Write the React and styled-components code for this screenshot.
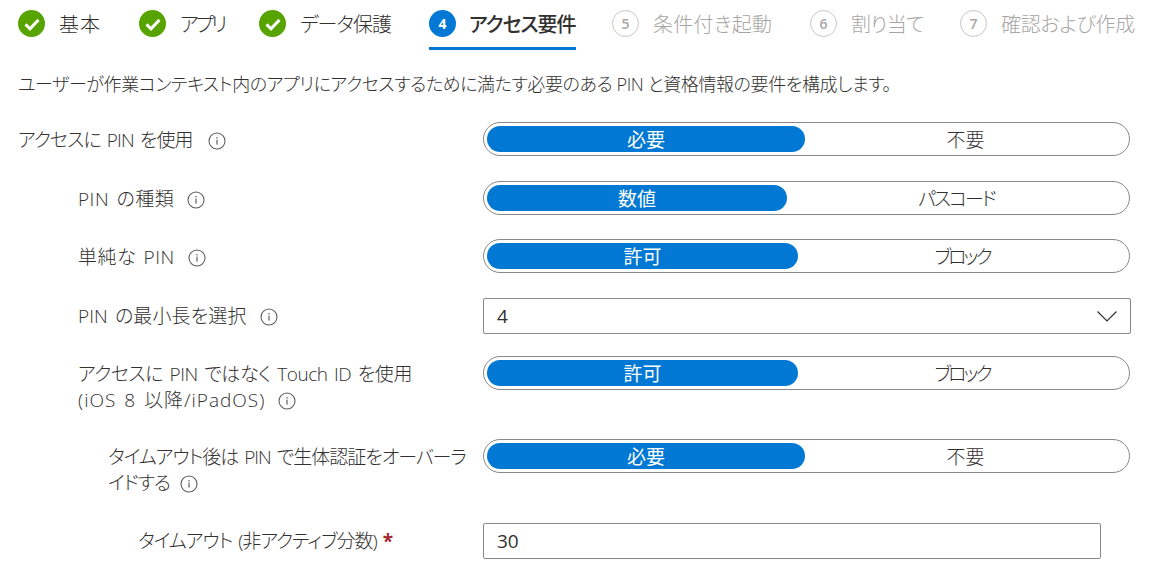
import React from 'react';
import styled, { createGlobalStyle } from 'styled-components';

const Global = createGlobalStyle`
  html, body { margin: 0; padding: 0; background: #fff; }
  body { font-family: "Open Sans", "Noto Sans CJK JP", sans-serif; color: #323130; overflow: hidden; font-feature-settings: "palt"; }
`;
const Page = styled.div`
  width: 1160px; height: 567px; overflow: hidden; padding: 0 0 0 18px; box-sizing: border-box;
`;
const Steps = styled.div`
  display: flex; height: 50px; align-items: flex-start;
`;
const Step = styled.div`
  display: flex; align-items: center; gap: ${p => p.$active ? 13 : 14}px; height: 50px; width: ${p => p.$w}px; box-sizing: border-box;
  font-size: 20px; white-space: nowrap; letter-spacing: ${p => p.$ls}px;
  font-weight: ${p => p.$active ? 500 : 300};
  color: ${p => p.$muted ? '#a8a6a4' : '#323130'};
  border-bottom: 3px solid ${p => p.$active ? '#0078d4' : 'transparent'};
  margin-right: ${p => p.$gap}px;
`;
const Description = styled.p`
  margin: 22px 0 0; font-size: 18px; line-height: 24px; font-weight: 300; letter-spacing: -0.4px; white-space: nowrap; height: 25px;
`;
const Form = styled.div`
  display: flex; flex-direction: column; margin-top: 25px;
`;
const Row = styled.div`
  display: grid; grid-template-columns: 465px 1fr; align-items: start; height: ${p => p.$h}px;
`;
const Label = styled.div`
  padding: 5px 17px 0 ${p => p.$indent}px; box-sizing: border-box;
  font-size: 19px; line-height: 26px; font-weight: 300; word-spacing: 2px; letter-spacing: ${p => p.$ls}px;
`;
const Line = styled.span`
  letter-spacing: ${p => p.$ls}px;
`;
const Toggle = styled.div`
  display: flex; width: 647px; height: 34px; box-sizing: border-box; padding: 3px; border: 1px solid #8a8886; border-radius: 17px;
`;
const Segment = styled.div`
  display: flex; align-items: center; justify-content: center; border-radius: 14px; font-size: 19px; font-weight: 300;
  letter-spacing: ${p => p.$ls || 0}px;
  ${p => p.$on ? `background:#0078d4;color:#fff;width:${p.$w}px;flex:none;font-weight:400;` : 'flex:1;color:#323130;'}
`;
const Field = styled.div`
  display: flex; align-items: center; justify-content: space-between; box-sizing: border-box; height: 36px; width: ${p => p.$w}px;
  border: 1px solid #8a8886; border-radius: 2px; padding: 0 13px 0 13px; font-size: 19px; font-weight: 400; color: #323130;
`;
const Req = styled.span`color: #a4262c; font-weight: 700; letter-spacing: 0;`;
const InfoWrap = styled.svg`display: inline-block; vertical-align: -3px; margin-left: ${p => p.$ml || 13}px;`;
const Badge = styled.span`
  display: flex; align-items: center; justify-content: center; flex: none; box-sizing: border-box; width: 27px; height: 27px; border-radius: 50%;
  font-size: 14px; font-weight: 700; letter-spacing: 0;
  ${p => p.$kind === 'done' ? 'background:#57a300;' : p.$kind === 'now' ? 'background:#0078d4;color:#fff;' : 'border:1.5px solid #c8c6c4;color:#a8a6a4;font-weight:600;'}
`;

const Info = ({ ml }) => (
  <InfoWrap $ml={ml} width="18" height="18" viewBox="0 0 18 18" fill="none">
    <circle cx="9" cy="9" r="8" stroke="#605e5c" strokeWidth="1.1" />
    <rect x="8.4" y="7.6" width="1.2" height="5" fill="#605e5c" />
    <rect x="8.4" y="5" width="1.2" height="1.4" fill="#605e5c" />
  </InfoWrap>
);
const Check = () => (
  <svg width="20" height="20" viewBox="0 0 17 17" fill="none">
    <path d="M3 8.8l3.8 3.8L14 5" stroke="#fff" strokeWidth="2.5" />
  </svg>
);
const Chevron = () => (
  <svg width="20" height="11" viewBox="0 0 20 11" fill="none">
    <path d="M.5.5L10 10 19.5.5" stroke="#323130" strokeWidth="1.2" />
  </svg>
);

const steps = [
  { t: '基本', k: 'done', w: 84, gap: 37, ls: 1 }, { t: 'アプリ', k: 'done', w: 86, gap: 34, ls: -3 }, { t: 'データ保護', k: 'done', w: 132, gap: 38, ls: -1 },
  { t: 'アクセス要件', k: 'now', n: 4, w: 147, gap: 36, ls: -1 }, { t: '条件付き起動', k: 'todo', n: 5, w: 162, gap: 36, ls: 0.3 },
  { t: '割り当て', k: 'todo', n: 6, w: 114, gap: 36, ls: -0.5 }, { t: '確認および作成', k: 'todo', n: 7, w: 176, gap: 0, ls: -0.3 },
];

const Switch = ({ a, b, w, ls }) => (
  <Toggle><Segment $on $w={w}>{a}</Segment><Segment $ls={ls}>{b}</Segment></Toggle>
);

export default function App() {
  return (
    <Page>
      <Global />
      <Steps>
        {steps.map(s => (
          <Step key={s.t} $w={s.w} $gap={s.gap} $ls={s.ls} $active={s.k === 'now'} $muted={s.k === 'todo'}>
            <Badge $kind={s.k}>{s.k === 'done' ? <Check /> : s.n}</Badge>{s.t}
          </Step>
        ))}
      </Steps>
      <Description>ユーザーが作業コンテキスト内のアプリにアクセスするために満たす必要のある PIN と資格情報の要件を構成します。</Description>
      <Form>
        <Row $h={59}><Label $indent={0} $ls={-0.9}>アクセスに PIN を使用<Info ml={15} /></Label><Switch a="必要" b="不要" w={318} /></Row>
        <Row $h={58}><Label $indent={60} $ls={0.5}>PIN の種類<Info /></Label><Switch a="数値" b="パスコード" w={300} ls={-2} /></Row>
        <Row $h={59}><Label $indent={60} $ls={0.5}>単純な PIN<Info /></Label><Switch a="許可" b="ブロック" w={311} ls={-3} /></Row>
        <Row $h={58}><Label $indent={60} $ls={0.1}>PIN の最小長を選択<Info /></Label><Field $w={648}>4<Chevron /></Field></Row>
        <Row $h={83}><Label $indent={60} $ls={-0.45}>アクセスに PIN ではなく Touch ID を使用<br /><Line $ls={1}>(iOS 8 以降/iPadOS)</Line><Info /></Label><Switch a="許可" b="ブロック" w={311} ls={-3} /></Row>
        <Row $h={84}><Label $indent={90} $ls={-1}>タイムアウト後は PIN で生体認証をオーバーライドする<Info ml={10} /></Label><Switch a="必要" b="不要" w={318} /></Row>
        <Row $h={36}><Label $indent={120} $ls={-1}>タイムアウト (非アクティブ分数) <Req>*</Req></Label><Field $w={618}>30</Field></Row>
      </Form>
    </Page>
  );
}
